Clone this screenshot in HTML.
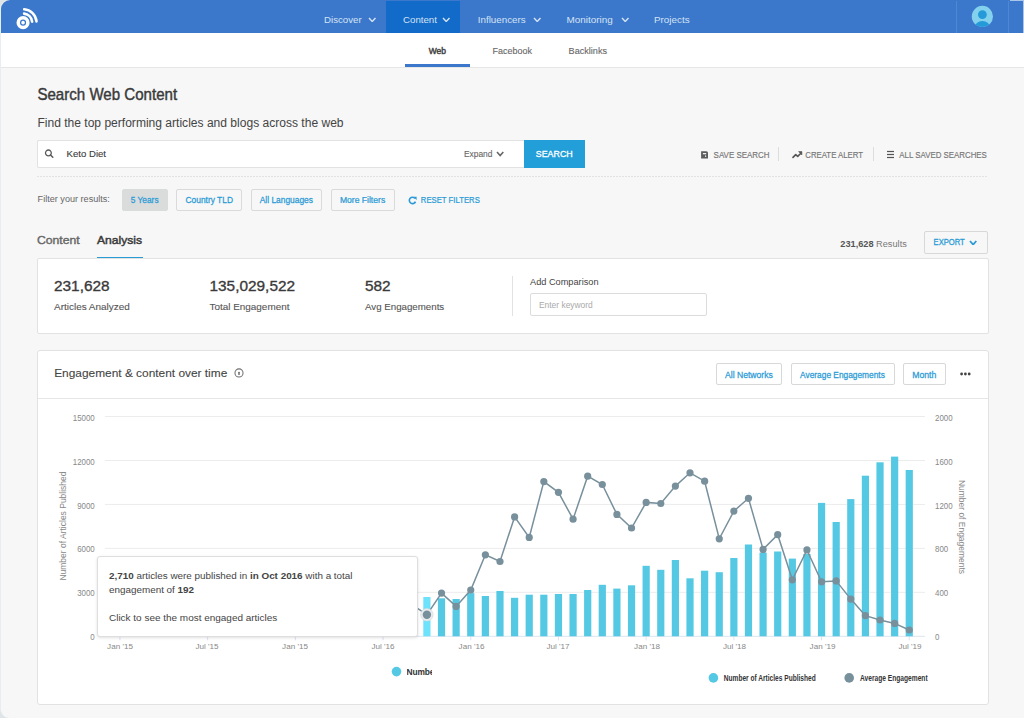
<!DOCTYPE html>
<html><head><meta charset="utf-8"><style>
html,body{margin:0;padding:0;width:1024px;height:718px;overflow:hidden;background:#dfe5e6;}
body{position:relative;font-family:"Liberation Sans", sans-serif;}
.t{position:absolute;white-space:nowrap;font-family:"Liberation Sans", sans-serif;}
</style></head><body>
<div style="position:absolute;left:0px;top:0px;width:1024px;height:718px;background:#dfe5e6;"></div>
<div style="position:absolute;left:0px;top:0px;width:1024px;height:718px;background:#f7f7f7;border-radius:9px 0 0 9px;border-left:1px solid #e6eef2;box-sizing:border-box;"></div>
<div style="position:absolute;left:1px;top:0px;width:1023px;height:33px;background:#3b78cb;border-top-left-radius:9px;"></div>
<div style="position:absolute;left:386px;top:1px;width:74px;height:32px;background:#126bc8;"></div>
<div style="position:absolute;left:956px;top:1px;width:1px;height:32px;background:#4f88d2;"></div>
<div style="position:absolute;left:1008px;top:1px;width:1px;height:32px;background:#4f88d2;"></div>
<div style="position:absolute;left:1010px;top:0px;width:14px;height:1px;background:#a9c6ea;"></div>
<div style="position:absolute;left:1023px;top:0px;width:1px;height:33px;background:#a9c6ea;"></div>
<svg style="position:absolute;left:367.6px;top:16.5px" width="8.5" height="5.5"><polyline points="1,1 4.25,4.5 7.5,1" fill="none" stroke="#d5e3f5" stroke-width="1.4"/></svg>
<svg style="position:absolute;left:442px;top:16.5px" width="8.5" height="5.5"><polyline points="1,1 4.25,4.5 7.5,1" fill="none" stroke="#d5e3f5" stroke-width="1.4"/></svg>
<svg style="position:absolute;left:533px;top:16.5px" width="8.5" height="5.5"><polyline points="1,1 4.25,4.5 7.5,1" fill="none" stroke="#d5e3f5" stroke-width="1.4"/></svg>
<svg style="position:absolute;left:621px;top:16.5px" width="8.5" height="5.5"><polyline points="1,1 4.25,4.5 7.5,1" fill="none" stroke="#d5e3f5" stroke-width="1.4"/></svg>
<svg style="position:absolute;left:0;top:0" width="50" height="33">
<circle cx="23.05" cy="22.65" r="4.8" fill="none" stroke="#fff" stroke-width="3.5"/>
<circle cx="23.05" cy="22.65" r="1.8" fill="#fff"/>
<path d="M 24.1 13.6 A 9.1 9.1 0 0 1 32.1 21.6" fill="none" stroke="#fff" stroke-width="2.6" stroke-linecap="round"/>
<path d="M 24.2 9.3 A 13.4 13.4 0 0 1 36.5 21.4" fill="none" stroke="#fff" stroke-width="2.6" stroke-linecap="round"/>
</svg>
<svg style="position:absolute;left:970;top:5px;left:971px" width="23" height="23">
<defs><clipPath id="av"><circle cx="11.4" cy="11.4" r="10.6"/></clipPath></defs>
<circle cx="11.4" cy="11.4" r="10.6" fill="#84d1ee"/>
<g clip-path="url(#av)"><circle cx="11.4" cy="9.6" r="4.4" fill="#249ad8"/><ellipse cx="11.4" cy="22.3" rx="7.8" ry="6.2" fill="#249ad8"/></g>
</svg>
<div style="position:absolute;left:1px;top:33px;width:1023px;height:34px;background:#fff;"></div>
<div style="position:absolute;left:1px;top:67px;width:1023px;height:1px;background:#e6e6e6;"></div>
<div style="position:absolute;left:405px;top:64px;width:65px;height:3px;background:#3b78cb;"></div>
<div style="position:absolute;left:37px;top:140px;width:487px;height:28px;background:#fff;border:1px solid #e2e2e2;border-right:none;border-radius:2px 0 0 2px;box-sizing:border-box;"></div>
<svg style="position:absolute;left:44px;top:149px" width="10" height="10"><circle cx="4.4" cy="3.9" r="2.9" fill="none" stroke="#5a5a5a" stroke-width="1.3"/><line x1="6.5" y1="6.0" x2="8.8" y2="8.3" stroke="#5a5a5a" stroke-width="1.5" stroke-linecap="round"/></svg>
<svg style="position:absolute;left:496.4px;top:151.1px" width="8.3" height="5.5"><polyline points="1,1 4.15,4.5 7.3,1" fill="none" stroke="#666" stroke-width="1.6"/></svg>
<div style="position:absolute;left:524px;top:140px;width:61px;height:28px;background:#229ed9;"></div>
<svg style="position:absolute;left:701px;top:150.5px" width="8" height="8"><path d="M0.1 0.3 H5.4 Q7 0.3 7 1.9 V7.5 H0.1 Z" fill="#5c5c5c"/><rect x="1.9" y="2" width="3.3" height="1.3" fill="#f0f0f0"/><ellipse cx="4.6" cy="5.2" rx="0.6" ry="0.9" fill="#e8e8e8"/></svg>
<div style="position:absolute;left:778px;top:147px;width:1px;height:14px;background:#ddd;"></div>
<svg style="position:absolute;left:791.5px;top:150.5px" width="11" height="8"><polyline points="1,6.4 3.7,3.6 5.7,5.4 8.9,2.2" fill="none" stroke="#555" stroke-width="1.6" stroke-linejoin="round" stroke-linecap="round"/><polygon points="6.6,0.6 9.9,0.6 9.9,3.9" fill="#555" stroke="#555" stroke-width="0.6" stroke-linejoin="round"/></svg>
<div style="position:absolute;left:873px;top:147px;width:1px;height:14px;background:#ddd;"></div>
<svg style="position:absolute;left:887px;top:150px" width="8" height="9"><rect x="0" y="0.9" width="7" height="1.2" fill="#555"/><rect x="0" y="3.9" width="7" height="1.2" fill="#555"/><rect x="0" y="6.9" width="7" height="1.2" fill="#555"/></svg>
<div style="position:absolute;left:37px;top:176px;width:951px;height:1px;background-image:linear-gradient(to right,#e2e2e2 67%,transparent 67%);background-size:3px 1px;"></div>
<div style="position:absolute;left:121.7px;top:188.6px;width:46.3px;height:22.0px;background:#dadcdc;border:1px solid #dadcdc;border-radius:2px;box-sizing:border-box;"></div>
<div style="position:absolute;left:176px;top:188.6px;width:65.80000000000001px;height:22.0px;background:transparent;border:1px solid #dadada;border-radius:2px;box-sizing:border-box;"></div>
<div style="position:absolute;left:250.5px;top:188.6px;width:71.80000000000001px;height:22.0px;background:transparent;border:1px solid #dadada;border-radius:2px;box-sizing:border-box;"></div>
<div style="position:absolute;left:330.5px;top:188.6px;width:64.5px;height:22.0px;background:transparent;border:1px solid #dadada;border-radius:2px;box-sizing:border-box;"></div>
<svg style="position:absolute;left:407.5px;top:195.5px" width="10" height="10"><path d="M 7.0 2.4 A 3.2 3.2 0 1 0 7.5 5.6" fill="none" stroke="#2b9bd6" stroke-width="1.6"/><polygon points="5.3,0.7 8.6,0.7 8.6,4.0" fill="#2b9bd6"/></svg>
<div style="position:absolute;left:97px;top:256.5px;width:46px;height:2.5px;background:#2b9bd6;"></div>
<div style="position:absolute;left:923.8px;top:231.2px;width:64.5px;height:23.0px;background:transparent;border:1px solid #d8d8d8;border-radius:2px;box-sizing:border-box;"></div>
<svg style="position:absolute;left:969px;top:239.6px" width="8.3" height="5.6"><polyline points="1,1 4.15,4.6 7.3,1" fill="none" stroke="#2b9bd6" stroke-width="1.8"/></svg>
<div style="position:absolute;left:37px;top:258px;width:952px;height:76px;background:#fff;border:1px solid #e2e2e2;border-radius:2px;box-sizing:border-box;"></div>
<div style="position:absolute;left:512px;top:276px;width:1px;height:40px;background:#e2e2e2;"></div>
<div style="position:absolute;left:530px;top:293px;width:177px;height:23px;background:#fff;border:1px solid #dcdcdc;border-radius:2px;box-sizing:border-box;"></div>
<div style="position:absolute;left:37px;top:350px;width:952px;height:355px;background:#fff;border:1px solid #e2e2e2;border-radius:3px;box-sizing:border-box;"></div>
<div style="position:absolute;left:38px;top:398px;width:950px;height:1px;background:#e6e6e6;"></div>
<svg style="position:absolute;left:233.5px;top:368px" width="11" height="11"><circle cx="5" cy="4.9" r="4.05" fill="none" stroke="#707070" stroke-width="1.05"/><rect x="4.35" y="3.8" width="1.3" height="3.1" rx="0.5" fill="#555"/></svg>
<div style="position:absolute;left:716.4px;top:363.2px;width:66.0px;height:22.30000000000001px;background:#fff;border:1px solid #d8d8d8;border-radius:2px;box-sizing:border-box;"></div>
<div style="position:absolute;left:791.2px;top:363.2px;width:103.89999999999998px;height:22.30000000000001px;background:#fff;border:1px solid #d8d8d8;border-radius:2px;box-sizing:border-box;"></div>
<div style="position:absolute;left:903.3px;top:363.2px;width:42.700000000000045px;height:22.30000000000001px;background:#fff;border:1px solid #d8d8d8;border-radius:2px;box-sizing:border-box;"></div>
<svg style="position:absolute;left:960px;top:372px" width="12" height="4"><circle cx="1.6" cy="2" r="1.4" fill="#444"/><circle cx="5.4" cy="2" r="1.4" fill="#444"/><circle cx="9.2" cy="2" r="1.4" fill="#444"/></svg>
<svg style="position:absolute;left:0;top:0" width="1024" height="718">
<line x1="105" y1="416.50" x2="925" y2="416.50" stroke="#ececec" stroke-width="1"/>
<line x1="105" y1="460.46" x2="925" y2="460.46" stroke="#ececec" stroke-width="1"/>
<line x1="105" y1="504.42" x2="925" y2="504.42" stroke="#ececec" stroke-width="1"/>
<line x1="105" y1="548.38" x2="925" y2="548.38" stroke="#ececec" stroke-width="1"/>
<line x1="105" y1="592.34" x2="925" y2="592.34" stroke="#ececec" stroke-width="1"/>
<line x1="105" y1="636.30" x2="925" y2="636.30" stroke="#dde3ee" stroke-width="1"/>
<line x1="119.94" y1="636.3" x2="119.94" y2="640.3" stroke="#dde3ee" stroke-width="1"/>
<line x1="207.64" y1="636.3" x2="207.64" y2="640.3" stroke="#dde3ee" stroke-width="1"/>
<line x1="295.35" y1="636.3" x2="295.35" y2="640.3" stroke="#dde3ee" stroke-width="1"/>
<line x1="383.05" y1="636.3" x2="383.05" y2="640.3" stroke="#dde3ee" stroke-width="1"/>
<line x1="470.75" y1="636.3" x2="470.75" y2="640.3" stroke="#dde3ee" stroke-width="1"/>
<line x1="558.45" y1="636.3" x2="558.45" y2="640.3" stroke="#dde3ee" stroke-width="1"/>
<line x1="646.15" y1="636.3" x2="646.15" y2="640.3" stroke="#dde3ee" stroke-width="1"/>
<line x1="733.86" y1="636.3" x2="733.86" y2="640.3" stroke="#dde3ee" stroke-width="1"/>
<line x1="821.56" y1="636.3" x2="821.56" y2="640.3" stroke="#dde3ee" stroke-width="1"/>
<line x1="909.26" y1="636.3" x2="909.26" y2="640.3" stroke="#dde3ee" stroke-width="1"/>
<rect x="423.30" y="597.00" width="7.2" height="39.30" fill="#6ee2fb"/>
<rect x="437.92" y="598.30" width="7.2" height="38.00" fill="#55c9e4"/>
<rect x="452.53" y="599.00" width="7.2" height="37.30" fill="#55c9e4"/>
<rect x="467.15" y="593.10" width="7.2" height="43.20" fill="#55c9e4"/>
<rect x="481.77" y="596.00" width="7.2" height="40.30" fill="#55c9e4"/>
<rect x="496.38" y="591.00" width="7.2" height="45.30" fill="#55c9e4"/>
<rect x="511.00" y="597.80" width="7.2" height="38.50" fill="#55c9e4"/>
<rect x="525.62" y="594.70" width="7.2" height="41.60" fill="#55c9e4"/>
<rect x="540.24" y="594.70" width="7.2" height="41.60" fill="#55c9e4"/>
<rect x="554.85" y="594.00" width="7.2" height="42.30" fill="#55c9e4"/>
<rect x="569.47" y="594.00" width="7.2" height="42.30" fill="#55c9e4"/>
<rect x="584.09" y="590.00" width="7.2" height="46.30" fill="#55c9e4"/>
<rect x="598.70" y="584.80" width="7.2" height="51.50" fill="#55c9e4"/>
<rect x="613.32" y="588.60" width="7.2" height="47.70" fill="#55c9e4"/>
<rect x="627.94" y="585.30" width="7.2" height="51.00" fill="#55c9e4"/>
<rect x="642.55" y="565.80" width="7.2" height="70.50" fill="#55c9e4"/>
<rect x="657.17" y="569.80" width="7.2" height="66.50" fill="#55c9e4"/>
<rect x="671.79" y="560.00" width="7.2" height="76.30" fill="#55c9e4"/>
<rect x="686.41" y="578.30" width="7.2" height="58.00" fill="#55c9e4"/>
<rect x="701.02" y="570.70" width="7.2" height="65.60" fill="#55c9e4"/>
<rect x="715.64" y="572.20" width="7.2" height="64.10" fill="#55c9e4"/>
<rect x="730.26" y="558.00" width="7.2" height="78.30" fill="#55c9e4"/>
<rect x="744.87" y="544.50" width="7.2" height="91.80" fill="#55c9e4"/>
<rect x="759.49" y="552.60" width="7.2" height="83.70" fill="#55c9e4"/>
<rect x="774.11" y="551.50" width="7.2" height="84.80" fill="#55c9e4"/>
<rect x="788.73" y="558.60" width="7.2" height="77.70" fill="#55c9e4"/>
<rect x="803.34" y="554.00" width="7.2" height="82.30" fill="#55c9e4"/>
<rect x="817.96" y="502.90" width="7.2" height="133.40" fill="#55c9e4"/>
<rect x="832.58" y="522.00" width="7.2" height="114.30" fill="#55c9e4"/>
<rect x="847.19" y="499.10" width="7.2" height="137.20" fill="#55c9e4"/>
<rect x="861.81" y="475.70" width="7.2" height="160.60" fill="#55c9e4"/>
<rect x="876.43" y="462.30" width="7.2" height="174.00" fill="#55c9e4"/>
<rect x="891.04" y="456.60" width="7.2" height="179.70" fill="#55c9e4"/>
<rect x="905.66" y="470.00" width="7.2" height="166.30" fill="#55c9e4"/>
<polyline points="405,600 426.90,614.70 441.52,593.10 456.13,606.40 470.75,590.00 485.37,554.80 499.99,561.50 514.60,516.90 529.22,537.40 543.84,481.60 558.45,492.30 573.07,519.20 587.69,476.20 602.30,484.50 616.92,514.40 631.54,528.00 646.15,502.40 660.77,503.50 675.39,486.10 690.01,472.80 704.62,481.20 719.24,538.80 733.86,511.10 748.47,498.30 763.09,549.40 777.71,534.70 792.33,579.80 806.94,549.90 821.56,581.80 836.18,580.90 850.79,599.10 865.41,615.70 880.03,620.00 894.64,623.40 909.26,630.00" fill="none" stroke="#78909c" stroke-width="1.5"/>
<circle cx="426.90" cy="614.70" r="6.3" fill="#e9ecee" stroke="#d3d8db" stroke-width="0.6"/>
<circle cx="426.90" cy="614.70" r="4.2" fill="#78909c"/>
<circle cx="441.52" cy="593.10" r="3.6" fill="#78909c"/>
<circle cx="456.13" cy="606.40" r="3.6" fill="#78909c"/>
<circle cx="470.75" cy="590.00" r="3.6" fill="#78909c"/>
<circle cx="485.37" cy="554.80" r="3.6" fill="#78909c"/>
<circle cx="499.99" cy="561.50" r="3.6" fill="#78909c"/>
<circle cx="514.60" cy="516.90" r="3.6" fill="#78909c"/>
<circle cx="529.22" cy="537.40" r="3.6" fill="#78909c"/>
<circle cx="543.84" cy="481.60" r="3.6" fill="#78909c"/>
<circle cx="558.45" cy="492.30" r="3.6" fill="#78909c"/>
<circle cx="573.07" cy="519.20" r="3.6" fill="#78909c"/>
<circle cx="587.69" cy="476.20" r="3.6" fill="#78909c"/>
<circle cx="602.30" cy="484.50" r="3.6" fill="#78909c"/>
<circle cx="616.92" cy="514.40" r="3.6" fill="#78909c"/>
<circle cx="631.54" cy="528.00" r="3.6" fill="#78909c"/>
<circle cx="646.15" cy="502.40" r="3.6" fill="#78909c"/>
<circle cx="660.77" cy="503.50" r="3.6" fill="#78909c"/>
<circle cx="675.39" cy="486.10" r="3.6" fill="#78909c"/>
<circle cx="690.01" cy="472.80" r="3.6" fill="#78909c"/>
<circle cx="704.62" cy="481.20" r="3.6" fill="#78909c"/>
<circle cx="719.24" cy="538.80" r="3.6" fill="#78909c"/>
<circle cx="733.86" cy="511.10" r="3.6" fill="#78909c"/>
<circle cx="748.47" cy="498.30" r="3.6" fill="#78909c"/>
<circle cx="763.09" cy="549.40" r="3.6" fill="#78909c"/>
<circle cx="777.71" cy="534.70" r="3.6" fill="#78909c"/>
<circle cx="792.33" cy="579.80" r="3.6" fill="#78909c"/>
<circle cx="806.94" cy="549.90" r="3.6" fill="#78909c"/>
<circle cx="821.56" cy="581.80" r="3.6" fill="#78909c"/>
<circle cx="836.18" cy="580.90" r="3.6" fill="#78909c"/>
<circle cx="850.79" cy="599.10" r="3.6" fill="#78909c"/>
<circle cx="865.41" cy="615.70" r="3.6" fill="#78909c"/>
<circle cx="880.03" cy="620.00" r="3.6" fill="#78909c"/>
<circle cx="894.64" cy="623.40" r="3.6" fill="#78909c"/>
<circle cx="909.26" cy="630.00" r="3.6" fill="#78909c"/>
</svg>
<div class="t" style="left:3px;top:521px;width:120px;height:10px;font-size:8.5px;line-height:10px;color:#888;text-align:center;transform:rotate(-90deg);">Number of Articles Published</div>
<div class="t" style="left:902px;top:521.5px;width:120px;height:10px;font-size:8.46px;line-height:10px;color:#888;text-align:center;transform:rotate(90deg);">Number of Engagements</div>
<div style="position:absolute;left:97px;top:556px;width:320.5px;height:81px;background:#fff;border:1px solid #dedede;border-radius:3px;box-sizing:border-box;box-shadow:0 1px 3px rgba(0,0,0,0.12);"></div>
<svg style="position:absolute;left:0;top:600px" width="1024" height="100"><circle cx="396.5" cy="71.6" r="4.8" fill="#55c9e4"/><circle cx="713.4" cy="77.9" r="4.8" fill="#55c9e4"/><circle cx="849.2" cy="77.9" r="4.8" fill="#78909c"/></svg>
<div class="t" style="left:406.5px;top:666px;width:25.2px;height:12px;overflow:hidden;font-size:8.4px;line-height:12px;color:#333;font-weight:bold;transform:scaleY(1.12);letter-spacing:-0.1px">Number of Articles Published</div>
<svg width="1024" height="718" style="position:absolute;left:0;top:0;font-family:&quot;Liberation Sans&quot;, sans-serif">
<text x="0" y="0" transform="translate(324.00,23) scale(1.0,1.019)" font-size="9.7" fill="#d5e3f5" font-weight="normal" text-anchor="start">Discover</text>
<text x="0" y="0" transform="translate(403.00,23) scale(1.0,1.019)" font-size="9.7" fill="#d5e3f5" font-weight="normal" text-anchor="start">Content</text>
<text x="0" y="0" transform="translate(477.80,23) scale(1.0,1.009)" font-size="9.8" fill="#d5e3f5" font-weight="normal" text-anchor="start">Influencers</text>
<text x="0" y="0" transform="translate(566.60,23) scale(1.0,0.998)" font-size="9.9" fill="#d5e3f5" font-weight="normal" text-anchor="start">Monitoring</text>
<text x="0" y="0" transform="translate(654.00,23) scale(1.0,1.003)" font-size="9.85" fill="#d5e3f5" font-weight="normal" text-anchor="start">Projects</text>
<text x="0" y="0" transform="translate(428.70,54) scale(1.0,1.005)" font-size="8.5" fill="#444" font-weight="normal" text-anchor="start" stroke="#444" stroke-width="0.45">Web</text>
<text x="0" y="0" transform="translate(492.60,54) scale(1.0,1.074)" font-size="9.0" fill="#666" font-weight="normal" text-anchor="start" stroke="#666" stroke-width="0.1">Facebook</text>
<text x="0" y="0" transform="translate(568.60,54) scale(1.0,1.062)" font-size="9.1" fill="#666" font-weight="normal" text-anchor="start" stroke="#666" stroke-width="0.1">Backlinks</text>
<text x="0" y="0" transform="translate(37.40,100) scale(1.0,1.04)" font-size="15.1" fill="#3a3a3a" font-weight="normal" text-anchor="start" stroke="#3a3a3a" stroke-width="0.4">Search Web Content</text>
<text x="0" y="0" transform="translate(37.40,127) scale(1.0,1.012)" font-size="12.07" fill="#444" font-weight="normal" text-anchor="start">Find the top performing articles and blogs across the web</text>
<text x="0" y="0" transform="translate(66.60,157) scale(1.0,1.037)" font-size="9.6" fill="#3a3a3a" font-weight="normal" text-anchor="start" stroke="#3a3a3a" stroke-width="0.1">Keto Diet</text>
<text x="0" y="0" transform="translate(464.00,157) scale(1.0,1.116)" font-size="8.4" fill="#666" font-weight="normal" text-anchor="start" stroke="#666" stroke-width="0.1">Expand</text>
<text x="0" y="0" transform="translate(535.80,157) scale(1.0,1.08)" font-size="8.85" fill="#fff" font-weight="normal" text-anchor="start" stroke="#fff" stroke-width="0.3">SEARCH</text>
<text x="0" y="0" transform="translate(713.60,158) scale(1.0,1.175)" font-size="7.95" fill="#777" font-weight="normal" text-anchor="start" stroke="#777" stroke-width="0.15">SAVE SEARCH</text>
<text x="0" y="0" transform="translate(805.30,158) scale(1.0,1.197)" font-size="7.8" fill="#777" font-weight="normal" text-anchor="start" stroke="#777" stroke-width="0.15">CREATE ALERT</text>
<text x="0" y="0" transform="translate(899.30,158) scale(1.0,1.182)" font-size="7.9" fill="#777" font-weight="normal" text-anchor="start" stroke="#777" stroke-width="0.15">ALL SAVED SEARCHES</text>
<text x="0" y="0" transform="translate(37.60,202) scale(1.0,0.958)" font-size="9.1" fill="#666" font-weight="normal" text-anchor="start">Filter your results:</text>
<text x="0" y="0" transform="translate(130.80,203) scale(1.0,1.025)" font-size="8.33" fill="#2b9bd6" font-weight="normal" text-anchor="start" stroke="#2b9bd6" stroke-width="0.25">5 Years</text>
<text x="0" y="0" transform="translate(185.50,203) scale(1.0,1.015)" font-size="8.41" fill="#2b9bd6" font-weight="normal" text-anchor="start" stroke="#2b9bd6" stroke-width="0.25">Country TLD</text>
<text x="0" y="0" transform="translate(259.70,203) scale(1.0,1.015)" font-size="8.41" fill="#2b9bd6" font-weight="normal" text-anchor="start" stroke="#2b9bd6" stroke-width="0.25">All Languages</text>
<text x="0" y="0" transform="translate(339.90,203) scale(1.0,0.993)" font-size="8.6" fill="#2b9bd6" font-weight="normal" text-anchor="start" stroke="#2b9bd6" stroke-width="0.25">More Filters</text>
<text x="0" y="0" transform="translate(420.80,203) scale(1.0,1.219)" font-size="7.75" fill="#2b9bd6" font-weight="normal" text-anchor="start" stroke="#2b9bd6" stroke-width="0.2">RESET FILTERS</text>
<text x="0" y="0" transform="translate(37.00,244) scale(1.0,0.929)" font-size="12.2" fill="#666" font-weight="normal" text-anchor="start" stroke="#666" stroke-width="0.4">Content</text>
<text x="0" y="0" transform="translate(97.00,244) scale(1.0,0.931)" font-size="12.1" fill="#3a3a3a" font-weight="normal" text-anchor="start" stroke="#3a3a3a" stroke-width="0.5">Analysis</text>
<text x="0" y="0" transform="translate(840.30,247) scale(1.07,1.132)" font-size="8.6" fill="#777" font-weight="normal" text-anchor="start"><tspan font-weight="bold" fill="#555">231,628</tspan> Results</text>
<text x="0" y="0" transform="translate(933.60,245) scale(1.0,1.2)" font-size="7.62" fill="#2b9bd6" font-weight="normal" text-anchor="start" stroke="#2b9bd6" stroke-width="0.25">EXPORT</text>
<text x="0" y="0" transform="translate(54.00,291) scale(1.0,0.974)" font-size="15.4" fill="#3a3a3a" font-weight="normal" text-anchor="start" stroke="#3a3a3a" stroke-width="0.35">231,628</text>
<text x="0" y="0" transform="translate(209.50,291) scale(1.0,0.974)" font-size="15.4" fill="#3a3a3a" font-weight="normal" text-anchor="start" stroke="#3a3a3a" stroke-width="0.35">135,029,522</text>
<text x="0" y="0" transform="translate(365.00,291) scale(1.0,0.974)" font-size="15.4" fill="#3a3a3a" font-weight="normal" text-anchor="start" stroke="#3a3a3a" stroke-width="0.35">582</text>
<text x="0" y="0" transform="translate(54.00,310) scale(1.0,0.983)" font-size="9.98" fill="#555" font-weight="normal" text-anchor="start" stroke="#555" stroke-width="0.1">Articles Analyzed</text>
<text x="0" y="0" transform="translate(209.50,310) scale(1.0,0.989)" font-size="9.92" fill="#555" font-weight="normal" text-anchor="start" stroke="#555" stroke-width="0.1">Total Engagement</text>
<text x="0" y="0" transform="translate(365.00,310) scale(1.0,1.008)" font-size="9.73" fill="#555" font-weight="normal" text-anchor="start" stroke="#555" stroke-width="0.1">Avg Engagements</text>
<text x="0" y="0" transform="translate(530.00,285) scale(1.0,0.994)" font-size="9.21" fill="#444" font-weight="normal" text-anchor="start">Add Comparison</text>
<text x="0" y="0" transform="translate(539.00,308) scale(1.0,1.036)" font-size="8.42" fill="#aaa" font-weight="normal" text-anchor="start">Enter keyword</text>
<text x="0" y="0" transform="translate(54.20,377) scale(1.0,0.959)" font-size="11.9" fill="#444" font-weight="normal" text-anchor="start" stroke="#444" stroke-width="0.1">Engagement &#38; content over time</text>
<text x="0" y="0" transform="translate(725.00,378) scale(1.0,1.094)" font-size="8.6" fill="#2b9bd6" font-weight="normal" text-anchor="start" stroke="#2b9bd6" stroke-width="0.25">All Networks</text>
<text x="0" y="0" transform="translate(800.10,378) scale(1.0,1.127)" font-size="8.35" fill="#2b9bd6" font-weight="normal" text-anchor="start" stroke="#2b9bd6" stroke-width="0.25">Average Engagements</text>
<text x="0" y="0" transform="translate(912.20,378) scale(1.0,1.082)" font-size="8.7" fill="#2b9bd6" font-weight="normal" text-anchor="start" stroke="#2b9bd6" stroke-width="0.25">Month</text>
<text x="0" y="0" transform="translate(94.70,421) scale(1.0,1.067)" font-size="7.9" fill="#888" font-weight="normal" text-anchor="end">15000</text>
<text x="0" y="0" transform="translate(94.70,465) scale(1.0,1.067)" font-size="7.9" fill="#888" font-weight="normal" text-anchor="end">12000</text>
<text x="0" y="0" transform="translate(94.70,509) scale(1.0,1.067)" font-size="7.9" fill="#888" font-weight="normal" text-anchor="end">9000</text>
<text x="0" y="0" transform="translate(94.70,552) scale(1.0,1.067)" font-size="7.9" fill="#888" font-weight="normal" text-anchor="end">6000</text>
<text x="0" y="0" transform="translate(94.70,596) scale(1.0,1.067)" font-size="7.9" fill="#888" font-weight="normal" text-anchor="end">3000</text>
<text x="0" y="0" transform="translate(94.70,640) scale(1.0,1.067)" font-size="7.9" fill="#888" font-weight="normal" text-anchor="end">0</text>
<text x="0" y="0" transform="translate(935.00,421) scale(1.0,1.067)" font-size="7.9" fill="#888" font-weight="normal" text-anchor="start">2000</text>
<text x="0" y="0" transform="translate(935.00,465) scale(1.0,1.067)" font-size="7.9" fill="#888" font-weight="normal" text-anchor="start">1600</text>
<text x="0" y="0" transform="translate(935.00,509) scale(1.0,1.067)" font-size="7.9" fill="#888" font-weight="normal" text-anchor="start">1200</text>
<text x="0" y="0" transform="translate(935.00,552) scale(1.0,1.067)" font-size="7.9" fill="#888" font-weight="normal" text-anchor="start">800</text>
<text x="0" y="0" transform="translate(935.00,596) scale(1.0,1.067)" font-size="7.9" fill="#888" font-weight="normal" text-anchor="start">400</text>
<text x="0" y="0" transform="translate(935.00,640) scale(1.0,1.067)" font-size="7.9" fill="#888" font-weight="normal" text-anchor="start">0</text>
<text x="0" y="0" transform="translate(120.00,649) scale(1.0,0.85)" font-size="8.1" fill="#888" font-weight="normal" text-anchor="middle">Jan '15</text>
<text x="0" y="0" transform="translate(207.00,649) scale(1.0,0.85)" font-size="8.1" fill="#888" font-weight="normal" text-anchor="middle">Jul '15</text>
<text x="0" y="0" transform="translate(295.00,649) scale(1.0,0.85)" font-size="8.1" fill="#888" font-weight="normal" text-anchor="middle">Jan '15</text>
<text x="0" y="0" transform="translate(383.00,649) scale(1.0,0.85)" font-size="8.1" fill="#888" font-weight="normal" text-anchor="middle">Jul '16</text>
<text x="0" y="0" transform="translate(471.50,649) scale(1.0,0.85)" font-size="8.1" fill="#888" font-weight="normal" text-anchor="middle">Jan '16</text>
<text x="0" y="0" transform="translate(558.00,649) scale(1.0,0.85)" font-size="8.1" fill="#888" font-weight="normal" text-anchor="middle">Jul '17</text>
<text x="0" y="0" transform="translate(647.00,649) scale(1.0,0.85)" font-size="8.1" fill="#888" font-weight="normal" text-anchor="middle">Jan '18</text>
<text x="0" y="0" transform="translate(734.50,649) scale(1.0,0.85)" font-size="8.1" fill="#888" font-weight="normal" text-anchor="middle">Jul '18</text>
<text x="0" y="0" transform="translate(822.50,649) scale(1.0,0.85)" font-size="8.1" fill="#888" font-weight="normal" text-anchor="middle">Jan '19</text>
<text x="0" y="0" transform="translate(910.00,649) scale(1.0,0.85)" font-size="8.1" fill="#888" font-weight="normal" text-anchor="middle">Jul '19</text>
<text x="0" y="0" transform="translate(109.00,579) scale(1.03,0.969)" font-size="9.6" fill="#444" font-weight="normal" text-anchor="start"><tspan font-weight="bold">2,710</tspan> articles were published in <tspan font-weight="bold">in Oct 2016</tspan> with a total</text>
<text x="0" y="0" transform="translate(109.00,593) scale(1.03,0.924)" font-size="9.6" fill="#444" font-weight="normal" text-anchor="start">engagement of <tspan font-weight="bold">192</tspan></text>
<text x="0" y="0" transform="translate(109.00,621) scale(1.0,0.948)" font-size="9.97" fill="#444" font-weight="normal" text-anchor="start">Click to see the most engaged articles</text>
<text x="0" y="0" transform="translate(723.80,681) scale(1.0,1.345)" font-size="6.59" fill="#333" font-weight="bold" text-anchor="start">Number of Articles Published</text>
<text x="0" y="0" transform="translate(860.00,681) scale(1.0,1.335)" font-size="6.64" fill="#333" font-weight="bold" text-anchor="start">Average Engagement</text>
</svg>
</body></html>
